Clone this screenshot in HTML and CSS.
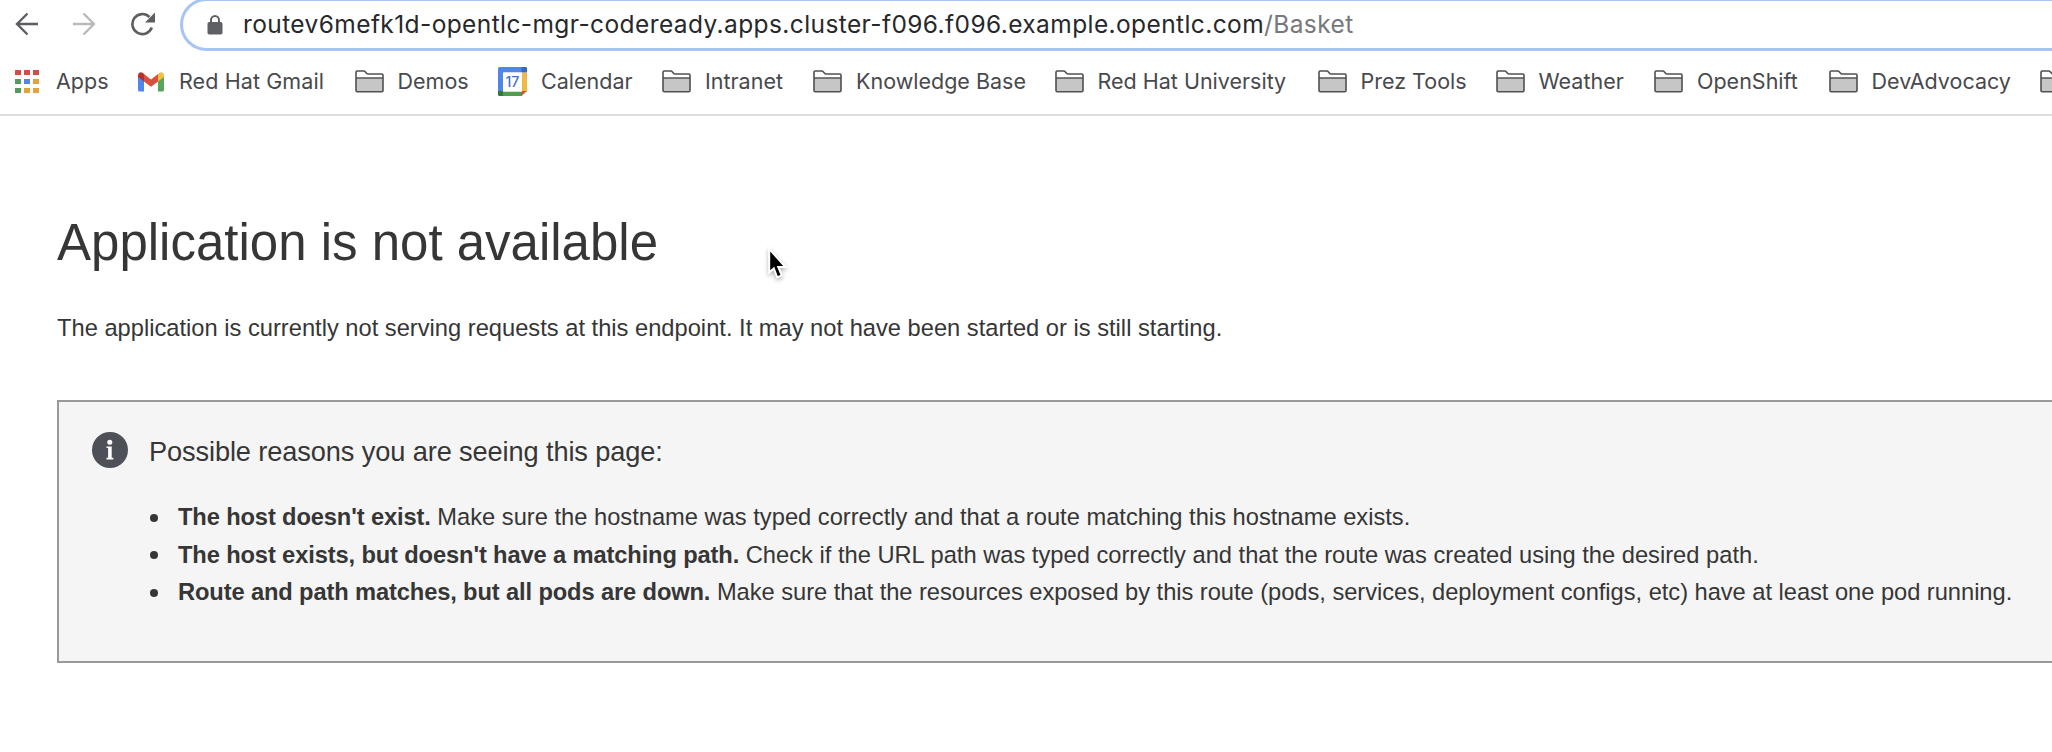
FILE: index.html
```html
<!DOCTYPE html>
<html lang="en">
<head>
<meta charset="utf-8">
<title>Application is not available</title>
<link rel="stylesheet" href="styles.css">
</head>
<body>
<svg width="0" height="0" class="defs">
  <symbol id="folder" viewBox="0 0 29 23">
    <path d="M1 20.5V2.2Q1 1 2.200 1H8.800Q9.600 1 10.200 1.700L11.800 3.500Q12.200 4 13 4H26.800Q28 4 28 5.200V20.500Q28 21.700 26.800 21.700H2.200Q1 21.700 1 20.500Z" fill="#fff"/>
    <path d="M1 8H28V21.500H1Z" fill="#c6c6c6"/>
    <path d="M1 8H28" stroke="#555" stroke-width="1.500"/>
    <path d="M1 20.5V2.200Q1 1 2.200 1H8.800Q9.600 1 10.200 1.700L11.800 3.500Q12.200 4 13 4H26.800Q28 4 28 5.200V20.500Q28 21.700 26.800 21.700H2.200Q1 21.700 1 20.500Z" fill="none" stroke="#505050" stroke-width="1.600"/>
  </symbol>
</svg>
<header class="chrome">
  <div class="toolbar">
    <svg class="nav-icon" viewBox="0 0 24 24"><path d="M23 12H2M12.500 1.500L2 12L12.500 22.500" fill="none" stroke="#5c5e61" stroke-width="2.400"/></svg>
    <svg class="nav-icon forward" viewBox="0 0 24 24"><path d="M1 12H22M11.500 1.500L22 12L11.500 22.500" fill="none" stroke="#b9babc" stroke-width="2.400"/></svg>
    <svg class="nav-icon reload" viewBox="0 0 26 24"><path d="M21.800 15.500A10 10 0 1 1 19.500 5" fill="none" stroke="#5c5e61" stroke-width="2.600"/><path d="M25 .5V10.500H15Z" fill="#5c5e61"/></svg>
    <div class="omnibox">
      <svg class="lock" viewBox="0 0 16 20"><path d="M4 8V5.200A4 4.200 0 0 1 12 5.200V8" fill="none" stroke="#5f6063" stroke-width="2"/><rect x=".5" y="7" width="15" height="12.500" rx="1.800" fill="#5f6063"/></svg>
      <div class="url">routev6mefk1d-opentlc-mgr-codeready.apps.cluster-f096.f096.example.opentlc.com<span class="path">/Basket</span></div>
    </div>
  </div>
  <nav class="bookmarks">
    <a class="bookmark apps"><svg viewBox="0 0 24 23" width="24" height="23"><path d="M0 0h6v5H0zM9 0h6v5H9zM18 0h6v5h-6z" fill="#d34d40"/><path d="M0 9h6v5H0zM0 18h6v5H0z" fill="#539b63"/><path d="M9 9h6v5H9z" fill="#4f86e8"/><path d="M18 9h6v5h-6zM9 18h6v5H9zM18 18h6v5h-6z" fill="#e2a33d"/></svg><span>Apps</span></a>
    <a class="bookmark gmail"><svg viewBox="0 0 26 20" width="26" height="20"><path d="M0 4L6 8V19.500H1.500Q0 19.500 0 18Z" fill="#5186ec"/><path d="M20 8L26 4V18Q26 19.500 24.500 19.500H20Z" fill="#58a55c"/><path d="M20 2L21.500 .8Q23.500-.3 25 1Q26 2 26 3.500V5L20 9.500Z" fill="#f1bf42"/><path d="M0 5V3.500Q0 2 1 1Q2.500-.3 4.500 .8L6 2V9.500Z" fill="#b5312a"/><path d="M6 2L13 7.500L20 2V9.500L13 14.700L6 9.500Z" fill="#d95040"/></svg><span>Red Hat Gmail</span></a>
    <a class="bookmark"><svg class="folder"><use href="#folder"/></svg><span>Demos</span></a>
    <a class="bookmark"><svg viewBox="0 0 29 29" width="29" height="29"><path d="M1.500 0H27.500Q29 0 29 1.500V5.500H5.500V24H0V1.500Q0 0 1.500 0Z" fill="#4f86e8"/><path d="M23.500 0H27.500Q29 0 29 1.500V5.500H23.500Z" fill="#3567cc"/><path d="M23.500 5.500H29V24.500H23.500Z" fill="#f0b941"/><path d="M5 24.500H24V29H5Z" fill="#4f9e50"/><path d="M0 24H5V29H1.500Q0 29 0 27.500Z" fill="#32783a"/><path d="M23.500 24H29L23.500 29Z" fill="#d65040"/><path d="M5 5.500H24V24.500H5Z" fill="#fff"/><text x="14.300" y="20" class="day">17</text></svg><span>Calendar</span></a>
    <a class="bookmark"><svg class="folder"><use href="#folder"/></svg><span>Intranet</span></a>
    <a class="bookmark"><svg class="folder"><use href="#folder"/></svg><span>Knowledge Base</span></a>
    <a class="bookmark"><svg class="folder"><use href="#folder"/></svg><span>Red Hat University</span></a>
    <a class="bookmark"><svg class="folder"><use href="#folder"/></svg><span>Prez Tools</span></a>
    <a class="bookmark"><svg class="folder"><use href="#folder"/></svg><span>Weather</span></a>
    <a class="bookmark"><svg class="folder"><use href="#folder"/></svg><span>OpenShift</span></a>
    <a class="bookmark"><svg class="folder"><use href="#folder"/></svg><span>DevAdvocacy</span></a>
    <a class="bookmark clipped"><svg class="folder"><use href="#folder"/></svg></a>
  </nav>
</header>
<main class="content">
  <h1>Application is not available</h1>
  <p class="lead">The application is currently not serving requests at this endpoint. It may not have been started or is still starting.</p>
  <section class="alert">
    <svg class="info" viewBox="0 0 36 36"><circle cx="18" cy="18" r="18" fill="#4d5057"/><circle cx="17.800" cy="10.300" r="2.500" fill="#fff"/><path d="M14.500 14.500H19.700V25.800H21.300V27.400H14.500V25.800H16.100V16.100H14.500Z" fill="#fff"/></svg>
    <div class="reasons">
      <p class="reasons-title">Possible reasons you are seeing this page:</p>
      <ul>
        <li><strong>The host doesn't exist.</strong> Make sure the hostname was typed correctly and that a route matching this hostname exists.</li>
        <li><strong>The host exists, but doesn't have a matching path.</strong> Check if the URL path was typed correctly and that the route was created using the desired path.</li>
        <li><strong>Route and path matches, but all pods are down.</strong> <span class="tight">Make sure that the resources exposed by this route (pods, services, deployment configs, etc) have at least one pod running.</span></li>
      </ul>
    </div>
  </section>
</main>
<svg class="cursor" viewBox="0 0 24 34"><path d="M3.200 1.800V25.500L7.800 21.500L11.200 30.300L15.800 28.400L12.200 20H19.500Z" fill="#000" stroke="#fff" stroke-width="2"/></svg>
</body>
</html>
```

FILE: styles.css
```css
* { box-sizing: border-box; }
body {
  margin: 0;
  width: 2052px;
  height: 752px;
  overflow: hidden;
  background: #fff;
  color: #363636;
  font-family: "Liberation Sans", Arial, sans-serif;
}
.defs { position: absolute; }
.chrome {
  height: 116px;
  border-bottom: 2px solid #dcdde0;
  font-family: Inter, Roboto, sans-serif;
  overflow: hidden;
}
.toolbar {
  display: flex;
  height: 51px;
  padding-left: 15px;
}
.nav-icon { width: 24px; height: 24px; margin-top: 11.500px; flex: none; }
.forward { margin-left: 33px; }
.reload { width: 26px; margin-left: 34px; }
.omnibox {
  display: flex;
  flex: 1;
  height: 53px;
  margin: -2px 0 0 24px;
  padding-left: 24px;
  border: 3px solid #a6c4f5;
  border-right: 0;
  border-radius: 27px 0 0 27px;
}
.lock { width: 16px; height: 20px; margin-top: 14px; flex: none; }
.url {
  margin-left: 20px;
  line-height: 47px;
  font-size: 24.500px;
  letter-spacing: .4px;
  color: #27282b;
  white-space: nowrap;
}
.path { color: #76787b; }
.bookmarks {
  display: grid;
  grid-template-columns: 123px 216.5px 143.500px 164px 151px 241.500px 263px 178px 158.500px 174.500px 211px 13px;
  height: 61px;
  padding-left: 15px;
  align-items: center;
}
.bookmark {
  display: flex;
  align-items: center;
  gap: 14px;
  font-size: 21.500px;
  color: #48494c;
  white-space: nowrap;
}
.bookmark svg { flex: none; }
.bookmark span { margin-top: -1px; }
.apps { gap: 17px; }
.gmail { gap: 15px; letter-spacing: .1px; }
.clipped { overflow: hidden; }
.folder { width: 29px; height: 23px; }
.day { font-size: 14px; font-weight: 500; fill: #4573c4; text-anchor: middle; }
.content { padding: 99px 0 0 57px; }
h1 { margin: 0; font-size: 51px; line-height: 56px; font-weight: 400; }
.lead { margin: 38px 0 0; font-size: 23.700px; line-height: 38px; }
.alert {
  display: flex;
  height: 263px;
  margin-top: 53px;
  padding: 30px 0 0 32.500px;
  background: #f5f5f5;
  border: 2px solid #999;
  border-right: 0;
}
.info { width: 36px; height: 36px; flex: none; }
.reasons { margin-left: 21.500px; }
.reasons-title { margin: 2px 0 0; font-size: 27.200px; line-height: 36px; letter-spacing: -.11px; }
ul { margin: 29px 0 0; padding: 0; list-style: none; }
li {
  font-size: 23.700px;
  line-height: 37.700px;
  white-space: nowrap;
}
li::before {
  content: "";
  display: inline-block;
  width: 8px;
  height: 8px;
  margin: 0 20px 3.500px 1px;
  border-radius: 50%;
  background: #363636;
  vertical-align: baseline;
}
strong { letter-spacing: -.13px; }
.tight { letter-spacing: -.035px; }
.cursor {
  position: absolute;
  left: 766px;
  top: 247px;
  width: 24px;
  height: 34px;
  filter: drop-shadow(0 2px 2px rgba(0, 0, 0, .3));
}
```
